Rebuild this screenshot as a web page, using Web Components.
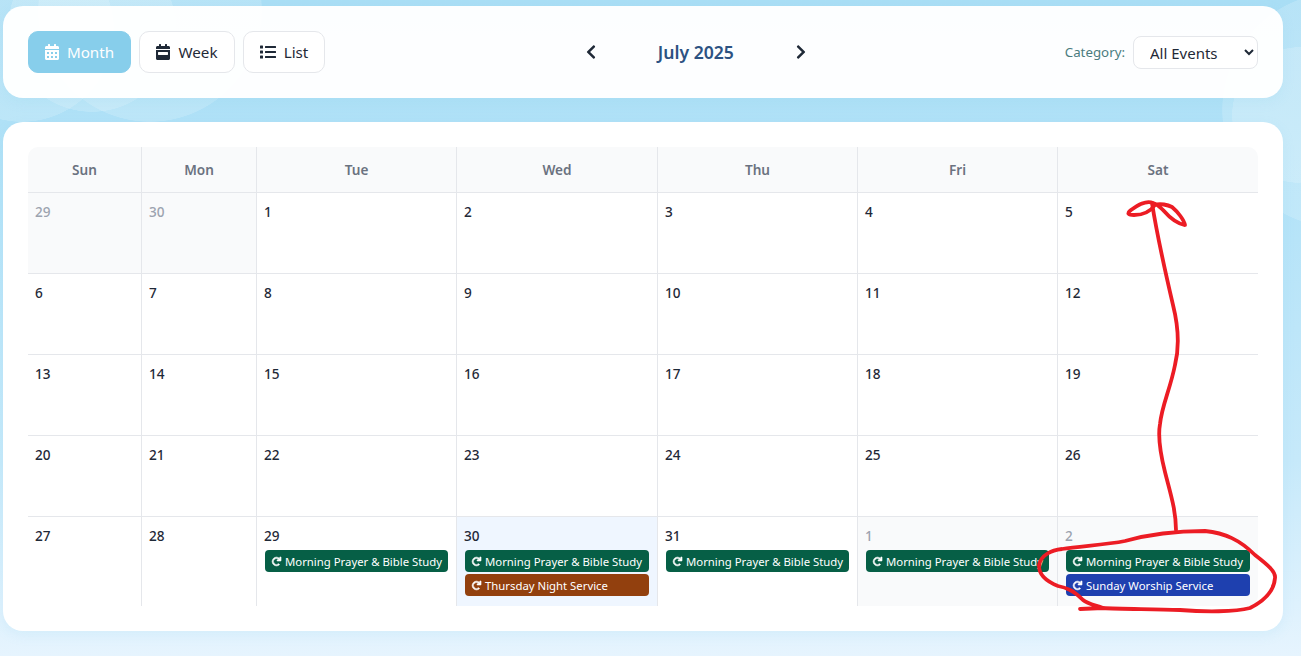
<!DOCTYPE html>
<html lang="en">
<head>
<meta charset="utf-8">
<title>Calendar</title>
<style>
  html, body { margin: 0; height: 100%; overflow: hidden; }
  body { font-family: "Noto Sans", "Open Sans", sans-serif; color: #1f2937; }
</style>
</head>
<body>
<calendar-page>
  <calendar-toolbar></calendar-toolbar>
  <calendar-month></calendar-month>
</calendar-page>
<pen-marks></pen-marks>

<script>
const ICONS = {
  month: ["0 0 448 512", "M0 464c0 26.5 21.5 48 48 48h352c26.5 0 48-21.5 48-48V192H0v272zm320-196c0-6.6 5.4-12 12-12h40c6.6 0 12 5.4 12 12v40c0 6.6-5.4 12-12 12h-40c-6.6 0-12-5.4-12-12v-40zm0 128c0-6.6 5.4-12 12-12h40c6.6 0 12 5.4 12 12v40c0 6.6-5.4 12-12 12h-40c-6.6 0-12-5.4-12-12v-40zM192 268c0-6.6 5.4-12 12-12h40c6.6 0 12 5.4 12 12v40c0 6.6-5.4 12-12 12h-40c-6.6 0-12-5.4-12-12v-40zm0 128c0-6.6 5.4-12 12-12h40c6.6 0 12 5.4 12 12v40c0 6.6-5.4 12-12 12h-40c-6.6 0-12-5.4-12-12v-40zM64 268c0-6.6 5.4-12 12-12h40c6.6 0 12 5.4 12 12v40c0 6.6-5.4 12-12 12H76c-6.6 0-12-5.4-12-12v-40zm0 128c0-6.6 5.4-12 12-12h40c6.6 0 12 5.4 12 12v40c0 6.6-5.4 12-12 12H76c-6.6 0-12-5.4-12-12v-40zM400 64h-48V16c0-8.8-7.2-16-16-16h-32c-8.8 0-16 7.2-16 16v48H160V16c0-8.8-7.2-16-16-16h-32c-8.8 0-16 7.2-16 16v48H48C21.5 64 0 85.5 0 112v48h448v-48c0-26.5-21.5-48-48-48z"],
  week: ["0 0 448 512", "M0 464c0 26.5 21.5 48 48 48h352c26.5 0 48-21.5 48-48V192H0v272zm64-192c0-8.8 7.2-16 16-16h288c8.8 0 16 7.2 16 16v64c0 8.8-7.2 16-16 16H80c-8.8 0-16-7.2-16-16v-64zM400 64h-48V16c0-8.8-7.2-16-16-16h-32c-8.8 0-16 7.2-16 16v48H160V16c0-8.8-7.2-16-16-16h-32c-8.8 0-16 7.2-16 16v48H48C21.5 64 0 85.5 0 112v48h448v-48c0-26.5-21.5-48-48-48z"],
  list: ["0 0 512 512", "M80 368H16a16 16 0 0 0-16 16v64a16 16 0 0 0 16 16h64a16 16 0 0 0 16-16v-64a16 16 0 0 0-16-16zm0-320H16A16 16 0 0 0 0 64v64a16 16 0 0 0 16 16h64a16 16 0 0 0 16-16V64a16 16 0 0 0-16-16zm0 160H16a16 16 0 0 0-16 16v64a16 16 0 0 0 16 16h64a16 16 0 0 0 16-16v-64a16 16 0 0 0-16-16zm416 176H176a16 16 0 0 0-16 16v32a16 16 0 0 0 16 16h320a16 16 0 0 0 16-16v-32a16 16 0 0 0-16-16zm0-320H176a16 16 0 0 0-16 16v32a16 16 0 0 0 16 16h320a16 16 0 0 0 16-16V80a16 16 0 0 0-16-16zm0 160H176a16 16 0 0 0-16 16v32a16 16 0 0 0 16 16h320a16 16 0 0 0 16-16v-32a16 16 0 0 0-16-16z"],
  prev: ["0 0 320 512", "M34.52 239.03L228.87 44.69c9.37-9.37 24.57-9.37 33.94 0l22.67 22.67c9.36 9.36 9.37 24.52.04 33.9L131.49 256l154.02 154.75c9.34 9.38 9.32 24.54-.04 33.9l-22.67 22.67c-9.37 9.37-24.57 9.37-33.94 0L34.52 272.97c-9.37-9.37-9.37-24.57 0-33.94z"],
  next: ["0 0 320 512", "M285.476 272.971L91.132 467.314c-9.373 9.373-24.569 9.373-33.941 0l-22.667-22.667c-9.357-9.357-9.375-24.522-.04-33.901L188.505 256 34.484 101.255c-9.335-9.379-9.317-24.544.04-33.901l22.667-22.667c9.373-9.373 24.569-9.373 33.941 0L285.475 239.03c9.373 9.372 9.373 24.568.001 33.941z"],
  redo: ["0 0 512 512", "M500.33 0h-47.41a12 12 0 0 0-12 12.57l4 82.76A247.42 247.42 0 0 0 256 8C119.34 8 8.9 119.53 8 256.19 7.1 393.07 118.1 504 256 504a247.1 247.1 0 0 0 166.18-63.91 12 12 0 0 0 .48-17.43l-34-34a12 12 0 0 0-16.38-.55A176 176 0 1 1 402.1 157.8l-101.53-4.87a12 12 0 0 0-12.57 12v47.41a12 12 0 0 0 12 12h200.33a12 12 0 0 0 12-12V12a12 12 0 0 0-12-12z"],
};

const icon = (name, size) => {
  const [box, d] = ICONS[name];
  return `<svg viewBox="${box}" height="${size}" fill="currentColor" aria-hidden="true"><path d="${d}"/></svg>`;
};

/* page background: gradient plus the pale translucent bubbles */
class CalendarPage extends HTMLElement {
  connectedCallback() {
    this.attachShadow({ mode: "open" });
    const bubble = (x, y, r) =>
      `radial-gradient(circle ${r}px at ${x}px ${y}px, rgba(255,255,255,.17) 99.5%, transparent 100%)`;
    this.shadowRoot.innerHTML = `
      <style>
        :host {
          display: flex;
          flex-direction: column;
          gap: 24px;
          box-sizing: border-box;
          height: 656px;
          padding: 6px 18px 0 3px;
          background:
            ${bubble(22, 30, 92)},
            ${bubble(92, 28, 84)},
            ${bubble(150, 10, 112)},
            ${bubble(1300, 115, 68)},
            ${bubble(1340, 110, 118)},
            linear-gradient(180deg, #a9def5 0%, #b4e3f8 30%, #c6e9fa 70%, #e6f4fe 100%);
        }
      </style>
      <slot></slot>
    `;
  }
}

class ViewButton extends HTMLElement {
  connectedCallback() {
    this.attachShadow({ mode: "open" });
    this.shadowRoot.innerHTML = `
      <style>
        :host {
          display: inline-flex;
          align-items: center;
          justify-content: center;
          gap: 8px;
          box-sizing: border-box;
          width: var(--btn-width, auto);
          height: 42px;
          border: 1px solid #e5e7eb;
          border-radius: 10px;
          background: #fff;
          color: #1f2937;
          font-size: 15.2px;
          cursor: pointer;
        }
        :host([active]) { background: #87ceeb; border-color: #87ceeb; color: #fff; }
        svg { display: block; }
      </style>
      ${icon(this.getAttribute("icon"), 16)}<slot></slot>
    `;
  }
}

class CalendarToolbar extends HTMLElement {
  connectedCallback() {
    this.attachShadow({ mode: "open" });
    this.shadowRoot.innerHTML = `
      <style>
        :host {
          display: flex;
          align-items: center;
          justify-content: space-between;
          box-sizing: border-box;
          height: 92px;
          padding: 0 25px;
          border-radius: 20px;
          background: rgba(255,255,255,.97);
          box-shadow: 0 4px 12px rgba(135,206,235,.15);
        }
        .views { display: flex; gap: 8px; }
        .nav { display: flex; align-items: center; margin: -1px 0 0 2px; }
        .nav button {
          display: flex;
          justify-content: center;
          width: 20px;
          padding: 0;
          border: 0;
          background: none;
          color: #1f2937;
          font: inherit;
          cursor: pointer;
        }
        h2 {
          width: 190px;
          margin: 0;
          color: #2c5282;
          font-size: 17.6px;
          font-weight: 600;
          text-align: center;
        }
        .filter { display: flex; align-items: center; gap: 8px; }
        label { color: #4a7c7e; font-size: 13.3px; }
        select {
          box-sizing: border-box;
          width: 125px;
          height: 33px;
          margin-top: 1px;
          padding: 0 12px;
          border: 1px solid #e5e7eb;
          border-radius: 8px;
          background: #fff;
          color: #1f2937;
          font-family: inherit;
          font-size: 15px;
        }
      </style>
      <div class="views">
        <view-button icon="month" active style="--btn-width:103px">Month</view-button>
        <view-button icon="week" style="--btn-width:96px">Week</view-button>
        <view-button icon="list" style="--btn-width:82px">List</view-button>
      </div>
      <div class="nav">
        <button aria-label="Previous month">${icon("prev", 16)}</button>
        <h2>July 2025</h2>
        <button aria-label="Next month">${icon("next", 16)}</button>
      </div>
      <div class="filter">
        <label for="cat">Category:</label>
        <select id="cat">
          <option>All Events</option>
          <option>Worship</option>
          <option>Bible Study</option>
        </select>
      </div>
    `;
  }
}

class CalendarEvent extends HTMLElement {
  connectedCallback() {
    this.attachShadow({ mode: "open" });
    this.shadowRoot.innerHTML = `
      <style>
        :host {
          display: flex;
          align-items: center;
          gap: 4px;
          box-sizing: border-box;
          height: 22px;
          padding: 0 6px 0 7px;
          border-radius: 4px;
          background: var(--event-color, #065f46);
          color: #fff;
          font-size: 11.35px;
          white-space: nowrap;
          overflow: hidden;
        }
        svg { display: block; flex: none; overflow: visible; }
        path { stroke: currentColor; stroke-width: 36; }
      </style>
      ${icon("redo", 9)}<slot></slot>
    `;
  }
}

class CalendarDay extends HTMLElement {
  connectedCallback() {
    this.attachShadow({ mode: "open" });
    this.shadowRoot.innerHTML = `
      <style>
        :host {
          display: block;
          box-sizing: border-box;
          min-width: 0;
          padding: 8px 8px 0;
          border-right: 1px solid #e5e7eb;
          border-bottom: 1px solid #e5e7eb;
          overflow: hidden;
        }
        :host([outside]) { background: #f9fafb; }
        :host([outside]) .num { color: #9ca3af; }
        :host([today]) { background: #eff6ff; }
        :host([last-col]) { border-right: 0; }
        :host([last-row]) { border-bottom: 0; }
        .num {
          height: 25px;
          margin-left: -1px;
          color: #1f2937;
          font-size: 13.6px;
          font-weight: 500;
          line-height: 22px;
        }
        .events { display: flex; flex-direction: column; gap: 2px; }
      </style>
      <div class="num">${this.getAttribute("num")}</div>
      <div class="events"><slot></slot></div>
    `;
  }
}

const GREEN = "#065f46", BROWN = "#92400e", BLUE = "#1e40af";
const PRAYER = ["Morning Prayer & Bible Study", GREEN];

class CalendarMonth extends HTMLElement {
  connectedCallback() {
    this.attachShadow({ mode: "open" });
    const heads = ["Sun", "Mon", "Tue", "Wed", "Thu", "Fri", "Sat"];
    // num, outside month, events
    const days = [
      [29, 1], [30, 1], [1], [2], [3], [4], [5],
      [6], [7], [8], [9], [10], [11], [12],
      [13], [14], [15], [16], [17], [18], [19],
      [20], [21], [22], [23], [24], [25], [26],
      [27], [28], [29, 0, [PRAYER]],
      [30, 0, [PRAYER, ["Thursday Night Service", BROWN]], true],
      [31, 0, [PRAYER]], [1, 1, [PRAYER]],
      [2, 1, [PRAYER, ["Sunday Worship Service", BLUE]]],
    ];
    const cells = days.map(([num, outside, events = [], today], i) => {
      const attrs = [
        outside ? "outside" : "",
        today ? "today" : "",
        i % 7 === 6 ? "last-col" : "",
        i >= 28 ? "last-row" : "",
      ].join(" ");
      const evs = events.map(([title, color]) =>
        `<calendar-event style="--event-color:${color}">${title.replace("&", "&amp;")}</calendar-event>`).join("");
      return `<calendar-day num="${num}" ${attrs}>${evs}</calendar-day>`;
    }).join("");

    this.shadowRoot.innerHTML = `
      <style>
        :host {
          display: block;
          box-sizing: border-box;
          height: 509px;
          padding: 25px;
          border-radius: 20px;
          background: #fff;
          box-shadow: 0 4px 12px rgba(135,206,235,.15);
        }
        .grid {
          display: grid;
          grid-template-columns: 114px 115px 200px 201px 200px 200px 200px;
          grid-template-rows: 46px repeat(4, 81px) 89px;
          border-radius: 10px;
          overflow: hidden;
        }
        .head {
          display: flex;
          align-items: center;
          justify-content: center;
          border-right: 1px solid #e5e7eb;
          border-bottom: 1px solid #e5e7eb;
          background: #f9fafb;
          color: #6b7280;
          font-size: 13.6px;
          font-weight: 600;
        }
        .head:nth-child(7) { border-right: 0; }
      </style>
      <div class="grid">
        ${heads.map(h => `<div class="head">${h}</div>`).join("")}
        ${cells}
      </div>
    `;
  }
}

/* hand-drawn red annotation lying over the page */
class PenMarks extends HTMLElement {
  connectedCallback() {
    this.attachShadow({ mode: "open" });
    this.shadowRoot.innerHTML = `
      <style>
        :host { position: absolute; left: 0; top: 0; width: 1301px; height: 656px; pointer-events: none; }
        svg { display: block; }
        path { fill: none; stroke: #ec1c24; stroke-width: 3.8; stroke-linecap: round; stroke-linejoin: round; }
      </style>
      <svg width="1301" height="656" viewBox="0 0 1301 656">
        <path d="M1176 530C1176 510 1170 492 1165 472C1160 452 1158 435 1160 424C1162 405 1170 390 1175 365C1180 345 1178 325 1173 305C1166 275 1157 235 1152 203"/>
        <path d="M1153 203C1146 200 1138 205 1131 210C1126 214 1129 215 1134 215C1142 215 1150 212 1155 205C1160 203 1168 205 1172 207C1178 212 1184 220 1185 225C1178 224 1170 218 1163 210C1160 207 1156 204 1153 203"/>
        <path d="M1080 609L1103 608C1095 605 1088 604 1083 600C1078 595 1074 592 1070 590C1066 588 1063 587 1058 586C1048 582 1039 576 1039 566C1040 555 1052 550 1062 549C1080 546 1105 545 1125 541C1150 534 1175 531 1205 531C1225 533 1240 540 1255 555C1268 565 1276 572 1275 578C1274 592 1262 602 1250 608C1235 612 1205 612 1180 610C1150 609 1120 609 1103 608"/>
      </svg>
    `;
  }
}

customElements.define("calendar-page", CalendarPage);
customElements.define("view-button", ViewButton);
customElements.define("calendar-toolbar", CalendarToolbar);
customElements.define("calendar-event", CalendarEvent);
customElements.define("calendar-day", CalendarDay);
customElements.define("calendar-month", CalendarMonth);
customElements.define("pen-marks", PenMarks);
</script>
</body>
</html>
